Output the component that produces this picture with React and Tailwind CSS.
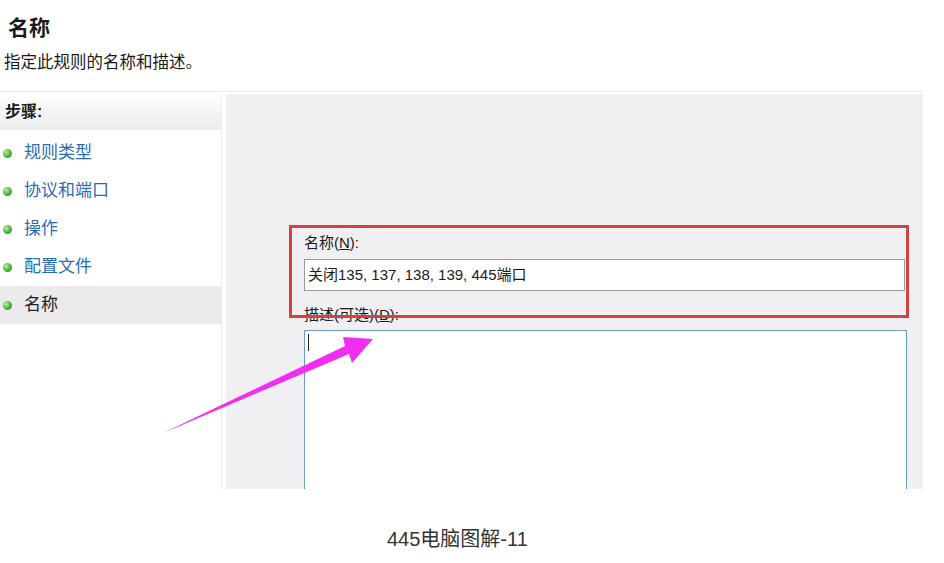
import React from "react";

const steps = [
  { label: "规则类型" },
  { label: "协议和端口" },
  { label: "操作" },
  { label: "配置文件" },
  { label: "名称", active: true },
];

const StepItem = ({ label, active }) => (
  <div
    className={`h-[38px] flex items-center pl-[3px] ${active ? "bg-[#ebebeb]" : ""}`}
  >
    <span className="w-[9px] h-[9px] rounded-full bg-[radial-gradient(circle_at_35%_35%,#b8f0a0,#4cae3c_55%,#2f7d25)]" />
    <span
      className={`ml-[12px] text-[17px] leading-[24px] ${active ? "text-[#222]" : "text-[#2a6db3]"}`}
    >
      {label}
    </span>
  </div>
);

const App = () => {
  return (
    <div className="relative w-[944px] h-[563px] bg-white overflow-hidden font-['Liberation_Sans','Noto_Sans_CJK_SC',sans-serif] text-[#1a1a1a]">
      {/* page header */}
      <div className="pl-2 pt-[15px] text-[21px] leading-[26px] font-bold">名称</div>
      <div className="pl-1 mt-[10px] text-[16.5px] leading-[22px]">指定此规则的名称和描述。</div>
      <div className="mt-[18px] h-px w-[923px] bg-[#ececf0]" />

      <div className="mt-[2px] flex w-[923px] h-[395px]">
        {/* steps pane */}
        <div className="w-[222px] bg-white border-r border-[#ececef]">
          <div className="h-[36px] flex items-center pl-[5px] bg-gradient-to-b from-white to-[#ebebeb] text-[16px] font-bold">
            步骤:
          </div>
          <div className="mt-[4px]">
            {steps.map((s) => (
              <StepItem key={s.label} {...s} />
            ))}
          </div>
        </div>

        {/* form pane */}
        <div className="relative ml-[4px] flex-1 bg-[#f0eff1] overflow-hidden">
          <div className="pt-[138px] pl-[78px] pr-[16px]">
            <div className="h-[22px] leading-[22px] text-[15px]">
              名称(<u>N</u>):
            </div>
            <div className="mt-[5px] mr-[2px] h-[32px] bg-white border border-[#9a9a9a] flex items-center pl-[3px] text-[15px]">
              关闭135, 137, 138, 139, 445端口
            </div>
            <div className="mt-[13px] h-[22px] leading-[22px] text-[15px]">
              描述(可选)(<u>D</u>):
            </div>
            <div className="mt-[4px] h-[300px] bg-white border border-[#6a9fc2] pl-[3px] pt-[3px]">
              <div className="w-px h-[17px] bg-[#222]" />
            </div>
          </div>

          {/* red highlight box */}
          <div className="absolute left-[63px] top-[131px] w-[620px] h-[93px] border-[3px] border-[#d2423f]" />
        </div>
      </div>

      <div className="mt-[38px] pl-[387px] text-[20px] leading-[24px] text-[#333]">445电脑图解-11</div>

      {/* magenta arrow */}
      <svg className="absolute left-0 top-0 pointer-events-none" width="944" height="563">
        <polygon
          points="163,433 345,346 343,337 373,339 352,363 349,354"
          fill="#f22cf0"
        />
      </svg>
    </div>
  );
};

export default App;
